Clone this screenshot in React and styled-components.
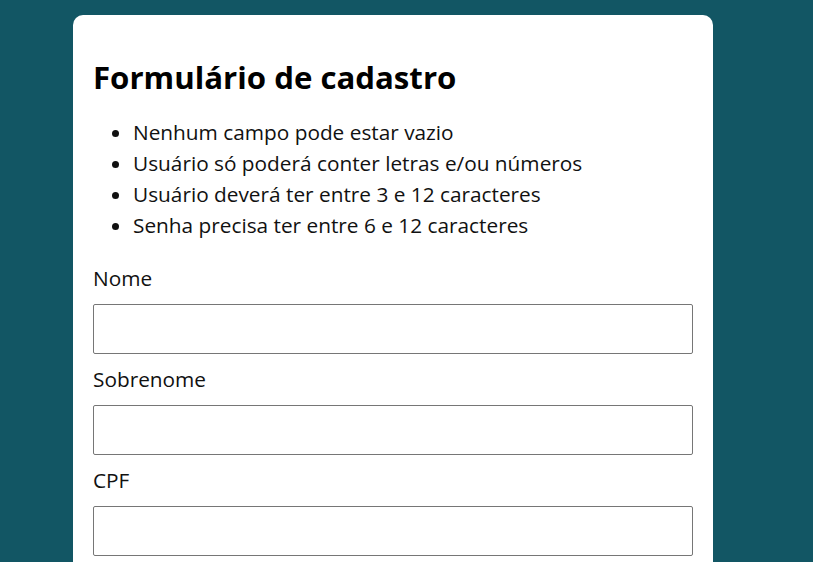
import React from "react";
import styled, { createGlobalStyle } from "styled-components";

const Global = createGlobalStyle`
  html, body { margin: 0; padding: 0; }
  body {
    background: #125664;
    font-family: "Open Sans", "Noto Sans", sans-serif;
    font-size: 20.8px;
    color: #111;
  }
`;

const Page = styled.div`
  display: flex;
  justify-content: center;
  padding-top: 15px;
  padding-right: 27px;
`;

const Card = styled.form`
  width: 640px;
  box-sizing: border-box;
  background: #fff;
  border-radius: 10px;
  padding: 36px 20px 40px;
`;

const Title = styled.h1`
  margin: 0;
  font-size: 31.2px;
  font-weight: 700;
  line-height: 52px;
  color: #000;
`;

const Rules = styled.ul`
  margin: 14px 0 22px;
  padding-left: 40px;
  font-size: 20.8px;
  line-height: 31px;
`;

const Field = styled.div`
  display: flex;
  flex-direction: column;
  gap: 11px;
  margin-bottom: 10px;
`;

const Label = styled.label`
  font-size: 20.8px;
  line-height: 30px;
`;

const Input = styled.input`
  height: 50px;
  box-sizing: border-box;
  border: 1px solid #767676;
  border-radius: 2px;
  font: inherit;
  font-size: 20px;
  padding: 0 10px;
`;

const rules = [
  "Nenhum campo pode estar vazio",
  "Usuário só poderá conter letras e/ou números",
  "Usuário deverá ter entre 3 e 12 caracteres",
  "Senha precisa ter entre 6 e 12 caracteres",
];

const fields = ["Nome", "Sobrenome", "CPF", "Usuário", "Senha"];

export default function App() {
  return (
    <>
      <Global />
      <Page>
        <Card onSubmit={(e) => e.preventDefault()}>
          <Title>Formulário de cadastro</Title>
          <Rules>
            {rules.map((r) => (
              <li key={r}>{r}</li>
            ))}
          </Rules>
          {fields.map((f) => (
            <Field key={f}>
              <Label htmlFor={f}>{f}</Label>
              <Input id={f} type={f === "Senha" ? "password" : "text"} />
            </Field>
          ))}
        </Card>
      </Page>
    </>
  );
}
